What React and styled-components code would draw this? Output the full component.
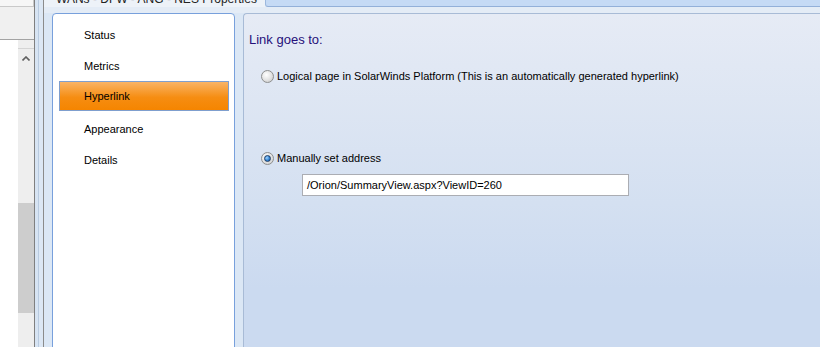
import React from 'react';
import styled, { createGlobalStyle } from 'styled-components';

const GlobalStyle = createGlobalStyle`
  html, body {
    margin: 0;
    padding: 0;
    background: #f0f0f0;
    font-family: "Liberation Sans", Arial, sans-serif;
  }
`;

const Window = styled.div`
  display: flex;
  width: 820px;
  height: 347px;
  overflow: hidden;
`;

const LeftPane = styled.div`
  width: 34px;
  display: flex;
  flex-direction: column;
  background: #f0f0f0;
`;

const TopBox = styled.div`
  height: 6px;
  background: #f6f6f6;
  border-bottom: 1px solid #c9c9c9;
  border-right: 1px solid #c9c9c9;
`;

const ListBox = styled.div`
  margin-top: 32px;
  flex: 1;
  display: flex;
  border-top: 1px solid #a3a3a3;
  background: #ffffff;
`;

const ListWhite = styled.div`
  width: 18px;
`;

const Scrollbar = styled.div`
  width: 16px;
  display: flex;
  flex-direction: column;
  background: #eeeeee;
`;

const ScrollButton = styled.div`
  height: 18px;
  margin-top: 8px;
  display: flex;
  align-items: center;
  justify-content: center;
  border-top: 1px solid #d4d4d4;
  color: #555;
`;

const Thumb = styled.div`
  margin-top: 136px;
  height: 110px;
  background: #cdcdcd;
`;

const Splitter = styled.div`
  width: 10px;
  background: linear-gradient(
    to right,
    #7f7f7f 0 1px,
    #d7e4f3 1px 4px,
    #b9cbe0 4px 5px,
    #dce7f4 5px 9px,
    #8b8b8b 9px 10px
  );
`;

const Main = styled.div`
  flex: 1;
  display: flex;
  flex-direction: column;
  background: #dbe7f5;
`;

const TabStrip = styled.div`
  height: 13px;
  display: flex;
  align-items: flex-start;
  background: #e4ecf6;
`;

const TabTitle = styled.div`
  width: 221px;
  height: 7px;
  overflow: hidden;
  background: #edf2f8;
  span {
    display: block;
    margin-top: -8px;
    padding-left: 12px;
    font-size: 12px;
    line-height: 14px;
    color: #222;
    white-space: nowrap;
  }
`;

const BlueTab = styled.div`
  flex: 1;
  height: 6px;
  background: #c5daf5;
  border-left: 1px solid #9cb8de;
  border-bottom: 1px solid #93b0d9;
  border-bottom-left-radius: 3px;
`;

const Body = styled.div`
  flex: 1;
  display: flex;
  padding-left: 8px;
  gap: 8px;
`;

const NavPanel = styled.div`
  width: 181px;
  margin-bottom: -10px;
  padding-top: 5px;
  background: #ffffff;
  border: 1px solid #78a0dc;
  border-radius: 4px 4px 0 0;
  display: flex;
  flex-direction: column;
`;

const NavItem = styled.div`
  height: ${({ $active }) => ($active ? '28px' : '31px')};
  margin: ${({ $active }) => ($active ? '0 5px 2px 6px' : '0 6px')};
  padding-left: ${({ $active }) => ($active ? '24px' : '25px')};
  display: flex;
  align-items: center;
  font-size: 11px;
  color: #000;
  border: ${({ $active }) => ($active ? '1px solid #7f9fce' : 'none')};
  background: ${({ $active }) =>
    $active ? 'linear-gradient(#f9b466, #f68d12 55%, #f58500)' : 'transparent'};
`;

const ContentPanel = styled.div`
  flex: 1;
  margin-bottom: -10px;
  padding-left: 5px;
  border-top: 1px solid #a8bbd6;
  border-left: 1px solid #a8bbd6;
  border-top-left-radius: 4px;
  background: linear-gradient(#e6ebf5, #d4e0f1 55%, #cbdaf0 80%);
`;

const Heading = styled.div`
  margin-top: 18px;
  font-size: 13px;
  line-height: 16px;
  color: #26107a;
`;

const RadioRow = styled.label`
  display: flex;
  align-items: center;
  gap: 3px;
  margin-top: ${({ $top }) => $top}px;
  padding-left: 12px;
  font-size: 11px;
  line-height: 14px;
  color: #000;
`;

const RadioDot = styled.span`
  width: 11px;
  height: 11px;
  border-radius: 50%;
  border: 1px solid #8e8f8f;
  background: radial-gradient(circle at 40% 35%, #ffffff, #e2e2e2 55%, #c4c4c4);
  display: flex;
  align-items: center;
  justify-content: center;
  &::after {
    content: '';
    display: ${({ $checked }) => ($checked ? 'block' : 'none')};
    width: 5px;
    height: 5px;
    border-radius: 50%;
    border: 1px solid #1c3c66;
    background: radial-gradient(circle at 35% 35%, #9fd4ff, #2f7fd0 60%, #1b4f8e);
  }
`;

const AddressInput = styled.div`
  margin: 9px 0 0 53px;
  width: 321px;
  height: 20px;
  padding-left: 4px;
  display: flex;
  align-items: center;
  background: #ffffff;
  border: 1px solid #abadb3;
  font-size: 11px;
  color: #000;
`;

const navItems = ['Status', 'Metrics', 'Hyperlink', 'Appearance', 'Details'];

function App() {
  return (
    <Window>
      <GlobalStyle />
      <LeftPane>
        <TopBox />
        <ListBox>
          <ListWhite />
          <Scrollbar>
            <ScrollButton>
              <svg width="8" height="5" viewBox="0 0 8 5">
                <path d="M0.5 4.5 L4 1 L7.5 4.5" fill="none" stroke="#606060" strokeWidth="1.6" />
              </svg>
            </ScrollButton>
            <Thumb />
          </Scrollbar>
        </ListBox>
      </LeftPane>
      <Splitter />
      <Main>
        <TabStrip>
          <TabTitle>
            <span>WANs - DFW - ANG - NES Properties</span>
          </TabTitle>
          <BlueTab />
        </TabStrip>
        <Body>
          <NavPanel>
            {navItems.map((item) => (
              <NavItem key={item} $active={item === 'Hyperlink'}>
                {item}
              </NavItem>
            ))}
          </NavPanel>
          <ContentPanel>
            <Heading>Link goes to:</Heading>
            <RadioRow $top={21}>
              <RadioDot />
              Logical page in SolarWinds Platform (This is an automatically generated hyperlink)
            </RadioRow>
            <RadioRow $top={68}>
              <RadioDot $checked />
              Manually set address
            </RadioRow>
            <AddressInput>/Orion/SummaryView.aspx?ViewID=260</AddressInput>
          </ContentPanel>
        </Body>
      </Main>
    </Window>
  );
}

export default App;
